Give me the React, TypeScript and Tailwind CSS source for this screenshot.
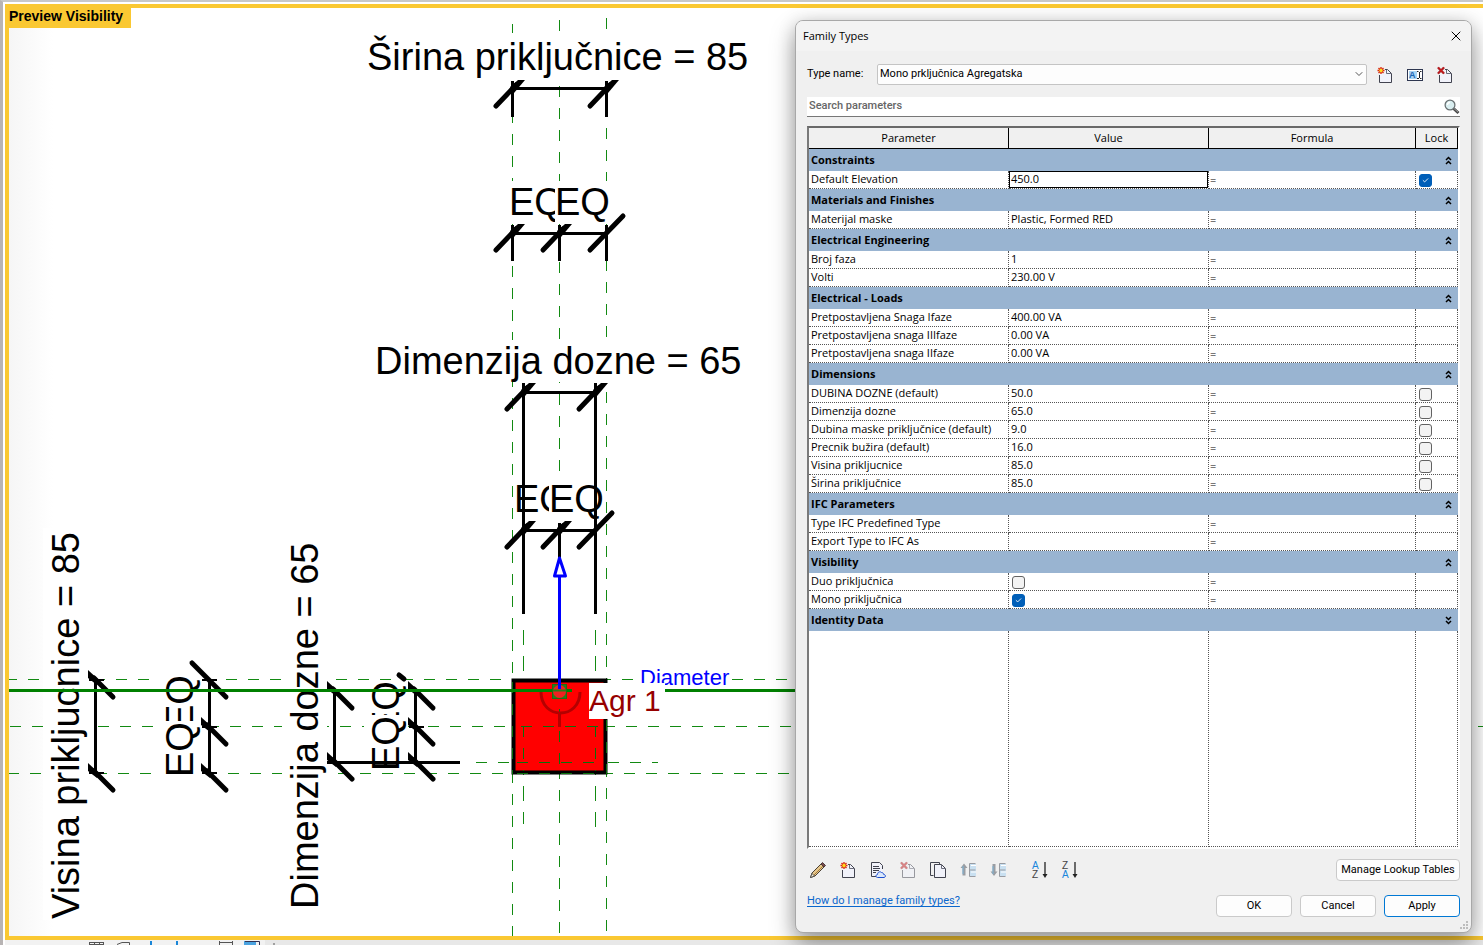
import React, { useState } from 'react';
import { Check, ChevronDown, X } from 'lucide-react';

interface Param {
  name: string;
  value?: string;
  checked?: boolean;
  lock?: boolean;
  active?: boolean;
}

interface ParamGroup {
  title: string;
  collapsed?: boolean;
  params: Param[];
}

const GROUPS: ParamGroup[] = [
  { title: 'Constraints', params: [{ name: 'Default Elevation', value: '450.0', lock: true, active: true }] },
  { title: 'Materials and Finishes', params: [{ name: 'Materijal maske', value: 'Plastic, Formed RED' }] },
  {
    title: 'Electrical Engineering',
    params: [
      { name: 'Broj faza', value: '1' },
      { name: 'Volti', value: '230.00 V' },
    ],
  },
  {
    title: 'Electrical - Loads',
    params: [
      { name: 'Pretpostavljena Snaga Ifaze', value: '400.00 VA' },
      { name: 'Pretpostavljena snaga IIIfaze', value: '0.00 VA' },
      { name: 'Pretpostavljena snaga IIfaze', value: '0.00 VA' },
    ],
  },
  {
    title: 'Dimensions',
    params: [
      { name: 'DUBINA DOZNE (default)', value: '50.0', lock: false },
      { name: 'Dimenzija dozne', value: '65.0', lock: false },
      { name: 'Dubina maske priključnice (default)', value: '9.0', lock: false },
      { name: 'Precnik bužira (default)', value: '16.0', lock: false },
      { name: 'Visina prikljucnice', value: '85.0', lock: false },
      { name: 'Širina priključnice', value: '85.0', lock: false },
    ],
  },
  { title: 'IFC Parameters', params: [{ name: 'Type IFC Predefined Type' }, { name: 'Export Type to IFC As' }] },
  {
    title: 'Visibility',
    params: [
      { name: 'Duo priključnica', checked: false },
      { name: 'Mono priključnica', checked: true },
    ],
  },
  { title: 'Identity Data', collapsed: true, params: [] },
];

/* ---------- Icons ---------- */

function Icon({ children, className = '' }: { children: React.ReactNode; className?: string }) {
  return (
    <svg
      width="16"
      height="16"
      viewBox="0 0 16 16"
      fill="none"
      className={`overflow-visible ${className}`}
      aria-hidden="true"
    >
      {children}
    </svg>
  );
}

function PageShape() {
  return (
    <>
      <path d="M2.5 7V15.5H14.5V6.5L10.5 2.5H7.5V7Z" fill="#f1f2fa" />
      <path d="M2.5 8V15.5H14.5V6.5L10.5 2.5H8" stroke="#41434f" />
      <path d="M9.5 3V6.5H14" stroke="#6b6d7a" />
    </>
  );
}

function NewIcon() {
  return (
    <Icon>
      <PageShape />
      <path d="M4 0V7M0.5 3.5H7.5M1.5 1L6.5 6M6.5 1L1.5 6" stroke="#d92b10" strokeWidth="1.4" />
      <circle cx="4" cy="3.5" r="1.7" fill="#ffd91a" />
    </Icon>
  );
}

function DeleteIcon({ disabled = false }: { disabled?: boolean }) {
  return (
    <Icon className={disabled ? 'opacity-50' : ''}>
      <PageShape />
      <path d="M1 0.5L7 6.5M7 0.5L1 6.5" stroke="#9c1219" strokeWidth="2.2" />
      <path d="M1 0.5L7 6.5M7 0.5L1 6.5" stroke="#e02222" strokeWidth="1" />
    </Icon>
  );
}

function RenameIcon() {
  return (
    <Icon>
      <rect x="0.5" y="2.5" width="15" height="11" fill="#fff" stroke="#2e3650" />
      <rect x="2" y="4" width="8" height="8" fill="#a9d3f2" />
      <text x="2" y="11" fontFamily="Liberation Sans" fontWeight="bold" fontSize="9" fill="#1b66b3">A</text>
      <path d="M10 4.5H11.5M13 4.5H14.5M12.5 5V11M10 11.5H12M13 11.5H14.5" stroke="#222" />
    </Icon>
  );
}

function SearchIcon() {
  return (
    <Icon>
      <path d="M9.5 9.5L14.5 14" stroke="#4b4b4b" strokeWidth="3" />
      <path d="M10 9.5L14 13" stroke="#9a9a9a" />
      <circle cx="6" cy="6" r="4.9" fill="#d9eef0" stroke="#6a7274" strokeWidth="1.3" />
      <path d="M3.5 6C3.5 4.5 4.5 3.5 6 3.5" stroke="#fff" strokeWidth="1.3" />
    </Icon>
  );
}

function PencilIcon() {
  return (
    <Icon>
      <path d="M0.5 15.5L2 11L12 1L15 4L5 14Z" fill="#e5c58a" stroke="#4a4034" />
      <path d="M4 13L13 4" stroke="#a77c3b" />
      <path d="M11 2L12.5 0.5L15.5 3.5L14 5Z" fill="#7b4a4c" stroke="#4a3a3a" />
      <path d="M0.5 15.5L2 11.5L4.5 14Z" fill="#f6eeda" stroke="#444" strokeWidth="0.8" />
    </Icon>
  );
}

function CloudPageIcon() {
  return (
    <Icon>
      <path d="M1.5 0.5H9.5L12.5 3.5V14.5H1.5Z" fill="#f1f2fa" />
      <path d="M6 14.5H1.5V0.5H9.5L12.5 3.5V7" stroke="#41434f" />
      <path d="M3 4.5H9M3 6.5H10M3 8.5H9M3 10.5H6" stroke="#41434f" />
      <path d="M7.5 15.5C5.5 15.5 5.5 12.5 7.5 12.5C7.5 10 10 9 11.5 10.5C13 10.5 13.5 11.5 13.5 12.3C15.8 12.3 16 15.5 14 15.5Z" fill="#dbe8fb" stroke="#1e4fd0" />
    </Icon>
  );
}

function CopyIcon() {
  return (
    <Icon>
      <path d="M3.5 13.5H0.5V0.5H9.5V2" stroke="#41434f" />
      <path d="M4.5 2.5H11.5L15.5 6.5V15.5H4.5Z" fill="#f1f2fa" stroke="#41434f" />
      <path d="M11.5 3V6.5H15" stroke="#6b6d7a" />
    </Icon>
  );
}

function MoveIcon({ down = false }: { down?: boolean }) {
  return (
    <Icon>
      <path
        d={down ? 'M4 14L0.5 9.5H2.5V2H5.5V9.5H7.5Z' : 'M4 1.5L7.5 6H5.5V13.5H2.5V6H0.5Z'}
        fill="#9a9da2"
      />
      <path d="M3 4V12" stroke="#7bb3d6" />
      <rect x="10" y="2" width="6" height="12" fill="#c9e0f1" />
      <path d="M15.5 1.5H9.5V14.5H15.5M9.5 8H15.5" stroke="#999ca2" />
      <path d="M11 3.5H16M11 10H16" stroke="#fff" />
    </Icon>
  );
}

function SortIcon({ desc = false }: { desc?: boolean }) {
  return (
    <Icon>
      <text x="0" y="7" fontFamily="Liberation Sans" fontSize="10" fill={desc ? '#444' : '#1a86dc'}>
        {desc ? 'Z' : 'A'}
      </text>
      <text x="0" y="16" fontFamily="Liberation Sans" fontSize="10" fill={desc ? '#1a86dc' : '#444'}>
        {desc ? 'A' : 'Z'}
      </text>
      <path d="M13 0V13" stroke="#222" strokeWidth="1.3" />
      <path d="M10.5 12H15.5L13 16Z" fill="#222" />
    </Icon>
  );
}

function GroupArrow({ down = false }: { down?: boolean }) {
  return (
    <svg width="7" height="9" viewBox="0 0 7 9" fill="none" stroke="#000" strokeWidth="1.5" aria-hidden="true">
      <path d={down ? 'M1 1L3.5 3.5L6 1M1 5L3.5 7.5L6 5' : 'M1 4L3.5 1.5L6 4M1 8L3.5 5.5L6 8'} />
    </svg>
  );
}

/* ---------- Preview drawing ---------- */

// Slash on a dimension line: "full" runs through, otherwise it is cut short next to the text
function HTick({ x, y, full = false }: { x: number; y: number; full?: boolean }) {
  return (
    <g>
      <path d={`M${x - 16} ${y + 17}L${x + (full ? 17 : 4)} ${y - (full ? 17 : 4)}`} strokeWidth="5" strokeLinecap="round" />
      {!full && <path d={`M${x - 2} ${y - 2}L${x + 6} ${y - 9}H${x + 13}L${x + 2} ${y + 4}Z`} fill="#000" stroke="none" />}
    </g>
  );
}

function VTick({ x, y, full = false }: { x: number; y: number; full?: boolean }) {
  return (
    <g>
      <path d={`M${x + 17} ${y + 17}L${x - (full ? 17 : 2)} ${y - (full ? 17 : 2)}`} strokeWidth="5" strokeLinecap="round" />
      {!full && <path d={`M${x - 8} ${y - 10}V${y - 2}L${x + 1} ${y + 5}L${x + 4} ${y + 1}Z`} fill="#000" stroke="none" />}
      <path d={`M${x - 7} ${y}H${x + 8}`} strokeWidth="2" />
    </g>
  );
}

function PreviewDrawing() {
  return (
    <svg className="absolute inset-0 h-full w-full" fontFamily="'Liberation Sans', Arial, sans-serif" fill="none">
      <g transform="translate(-9 -8)">
        {/* Reference planes */}
        <g stroke="#128a12" strokeWidth="1">
          <path d="M512.5 24V936" strokeDasharray="11 11" />
          <path d="M559.5 20V936" strokeDasharray="11 11" />
          <path d="M606.5 18V936" strokeDasharray="11 11" />
          <path d="M6 679.5H800" strokeDasharray="11 11" />
          <path d="M10 726.5H800" strokeDasharray="11 11" />
          <path d="M8 773.5H800" strokeDasharray="11 11" />
          <path d="M476 762.5H658" strokeDasharray="11 11" />
          <path d="M523.5 630V824M595.5 630V829" strokeDasharray="15 11" />
          <path d="M1478 726.5H1483" />
        </g>

        {/* Masks behind the dimension texts */}
        <g fill="#fff">
          <rect x="366" y="33" width="384" height="46" />
          <rect x="508" y="181" width="102" height="43" />
          <rect x="374" y="340" width="368" height="42" />
          <rect x="513" y="477" width="90" height="43" />
          <rect x="43" y="528" width="45" height="392" />
          <rect x="157" y="674" width="45" height="104" />
          <rect x="282" y="540" width="45" height="370" />
          <rect x="364" y="680" width="44" height="91" />
          <rect x="638" y="665" width="94" height="20" />
        </g>

        {/* Dimension lines */}
        <g stroke="#000" strokeWidth="3">
          <path d="M512 88.5H607M512.5 81V117M606.5 81V117" />
          <HTick x={512} y={89} />
          <HTick x={606} y={89} />

          <path d="M512 233.5H607M512.5 225V261M559.5 225V261M606.5 225V261" />
          <HTick x={512} y={233} />
          <HTick x={559} y={233} />
          <HTick x={606} y={233} full />

          <path d="M523 392.5H596M523.5 383V614M595.5 383V614" />
          <HTick x={523} y={392} />
          <HTick x={595} y={392} />

          <path d="M523 530.5H596M559.5 523V558" />
          <HTick x={523} y={530} />
          <HTick x={559} y={530} />
          <HTick x={595} y={530} full />

          <path d="M95.5 679V774" />
          <VTick x={96} y={680} />
          <VTick x={96} y={773} />

          <path d="M209.5 679V774" />
          <VTick x={209} y={680} full />
          <VTick x={209} y={727} />
          <VTick x={209} y={773} />

          <path d="M334.5 690V763M327 762.5H460" />
          <VTick x={335} y={691} />
          <VTick x={335} y={762} />

          <path d="M415.5 690V763" />
          <VTick x={416} y={691} />
          <VTick x={416} y={727} />
          <VTick x={416} y={762} />
          <path d="M399 675L404 679" strokeWidth="5" strokeLinecap="round" />
        </g>

        {/* Dimension texts */}
        <g fill="#000" fontSize="38">
          <text x="367" y="70">Širina priključnice = 85</text>
          <text x="375" y="374">Dimenzija dozne = 65</text>

          <text x="509" y="215">EQ</text>
          <rect x="555" y="186" width="30" height="37" fill="#fff" />
          <text x="555" y="215">EQ</text>

          <text x="514" y="512">EQ</text>
          <rect x="549" y="483" width="30" height="36" fill="#fff" />
          <path d="M523.5 477V520" stroke="#000" strokeWidth="3" />
          <text x="549" y="512">EQ</text>

          <text transform="translate(79 919) rotate(-90)">Visina prikljucnice = 85</text>
          <text transform="translate(318 909) rotate(-90)">Dimenzija dozne = 65</text>

          <text transform="translate(193 730) rotate(-90)">EQ</text>
          <rect x="163" y="721" width="38" height="30" fill="#fff" />
          <text transform="translate(193 777) rotate(-90)">EQ</text>

          <text transform="translate(399 736) rotate(-90)">EQ</text>
          <rect x="369" y="715" width="38" height="30" fill="#fff" />
          <text transform="translate(399 771) rotate(-90)">EQ</text>
        </g>
        <path d="M364 762.5H408" stroke="#000" strokeWidth="3" />

        {/* Socket */}
        <rect x="513.5" y="680.5" width="92" height="92" fill="#f00" stroke="#000" strokeWidth="4" />
        <g stroke="#0a700a" strokeWidth="1">
          <path d="M512.5 682V774M606.5 720V774M559.5 709V770M523.5 726V771M595.5 726V771" strokeDasharray="11 11" />
          <path d="M521 726.5H604M517 762.5H604M517 773.5H604" strokeDasharray="11 11" />
        </g>
        <path d="M541 692C541 720 580 720 580 692M559.5 713V727" stroke="#b40000" strokeWidth="3" />
        <path d="M9 690.5H572" stroke="#008000" strokeWidth="3" />
        <path d="M660 690.5H800" stroke="#008000" strokeWidth="3" />
        <rect x="552.5" y="684.5" width="14" height="14" fill="#2b7a1a" stroke="#1d6e12" />
        <circle cx="559.5" cy="691.5" r="6.5" fill="#f02020" />
        <path d="M553 690.5H566" stroke="#2b7a1a" strokeWidth="2" />

        {/* Connector direction arrow */}
        <g stroke="#00f" strokeWidth="3">
          <path d="M559.5 577V689" />
          <path d="M559.5 558L565.5 576H554.5Z" fill="#fff" strokeLinejoin="round" />
        </g>

        <text x="640" y="685" fontSize="22" fill="#00f">Diameter</text>
        <rect x="589" y="683" width="76" height="36" fill="#fff" />
        <text x="589" y="711" fontSize="30" fill="#960000">Agr 1</text>
      </g>
    </svg>
  );
}

/* ---------- Dialog ---------- */

function CheckBox({ label, initial }: { label: string; initial: boolean }) {
  const [checked, setChecked] = useState(initial);

  return (
    <span className="relative mt-[3px] ml-[3px] block size-[13px]">
      <input
        type="checkbox"
        aria-label={label}
        checked={checked}
        onChange={(e) => setChecked(e.target.checked)}
        className="block size-[13px] appearance-none rounded-[3px] border border-[#626262] bg-[#f3f3f3] checked:border-[#005fb8] checked:bg-[#005fb8]"
      />
      {checked && (
        <Check className="pointer-events-none absolute top-[3px] left-[3px] size-[7px] text-white" strokeWidth={3} />
      )}
    </span>
  );
}

function ParamRow({ param }: { param: Param }) {
  const [value, setValue] = useState(param.value ?? '');
  const cell = 'h-[18px] border-r border-b border-dotted border-[#555] p-0 align-top';

  return (
    <tr className="bg-white">
      <td className={`${cell} pl-0.5 leading-[16px] whitespace-nowrap`}>{param.name}</td>
      <td className={cell}>
        {param.checked !== undefined ? (
          <CheckBox label={param.name} initial={param.checked} />
        ) : (
          <input
            type="text"
            aria-label={param.name}
            value={value}
            onChange={(e) => setValue(e.target.value)}
            className={`block h-[17px] w-full pb-0.5 outline-none ${
              param.active ? 'border border-black px-px' : 'px-0.5'
            }`}
          />
        )}
      </td>
      <td className={`${cell} pl-px leading-[17px]`}>=</td>
      <td className={cell}>
        {param.lock !== undefined && <CheckBox label={`Lock ${param.name}`} initial={param.lock} />}
      </td>
    </tr>
  );
}

function ParamTable() {
  const head = 'h-[21px] border-r border-b border-black bg-[#f0f0f0] p-0 text-center font-normal';
  const filler = 'border-r border-b border-dotted border-[#555] p-0';

  return (
    <div className="mt-[9px] flex-1 border-2 border-t-[#696969] border-r-white border-b-white border-l-[#7a7a7a] bg-white">
      <table className="h-full w-full table-fixed border-separate border-spacing-0 font-['Open_Sans','Noto_Sans',sans-serif] text-[11px]">
        <colgroup>
          <col className="w-[200px]" />
          <col className="w-[200px]" />
          <col />
          <col className="w-[42px]" />
        </colgroup>
        <thead>
          <tr>
            <th className={head}>Parameter</th>
            <th className={head}>Value</th>
            <th className={head}>Formula</th>
            <th className={head}>Lock</th>
          </tr>
        </thead>
        <tbody>
          {GROUPS.map((group) => (
            <React.Fragment key={group.title}>
              <tr className="bg-[#99b4d1]">
                <th colSpan={4} className="h-[22px] p-0 text-left font-bold">
                  <div className="flex items-center justify-between pt-px pr-1.5 pl-0.5">
                    {group.title}
                    <button type="button" aria-label={`Toggle ${group.title}`}>
                      <GroupArrow down={group.collapsed} />
                    </button>
                  </div>
                </th>
              </tr>
              {group.params.map((param) => (
                <ParamRow key={param.name} param={param} />
              ))}
            </React.Fragment>
          ))}
          <tr className="h-full">
            <td className={filler} />
            <td className={filler} />
            <td className={filler} />
            <td className={filler} />
          </tr>
        </tbody>
      </table>
    </div>
  );
}

const TOOLS = [
  { label: 'Edit parameter', icon: <PencilIcon /> },
  { label: 'New parameter', icon: <NewIcon /> },
  { label: 'Shared parameter', icon: <CloudPageIcon /> },
  { label: 'Delete parameter', icon: <DeleteIcon disabled /> },
  { label: 'Copy parameter', icon: <CopyIcon /> },
  { label: 'Move up', icon: <MoveIcon /> },
  { label: 'Move down', icon: <MoveIcon down /> },
];

function FamilyTypesDialog() {
  const button =
    'flex h-[22px] items-center justify-center rounded-[4px] border bg-[#fdfdfd]';

  return (
    <section
      role="dialog"
      aria-label="Family Types"
      className="absolute top-[18px] right-[11px] bottom-3 flex w-[677px] flex-col overflow-hidden rounded-lg border border-[#a8a8a8] bg-[#f0f0f0] text-[11px] shadow-[0_12px_24px_rgba(0,0,0,0.34),0_2px_18px_rgba(0,0,0,0.16)]"
    >
      <header className="flex h-[30px] items-center justify-between bg-[#f3f3f3] pr-[7px] pl-[7px]">
        <h1 className="font-['Open_Sans','Noto_Sans',sans-serif] text-[11px]">Family Types</h1>
        <button type="button" aria-label="Close">
          <X className="size-4" strokeWidth={1.5} />
        </button>
      </header>

      <div className="flex min-h-0 flex-1 flex-col px-[11px] pt-[13px] pb-[15px]">
        <div className="flex items-center">
          <label htmlFor="type-name" className="w-[70px]">
            Type name:
          </label>
          <div className="relative flex-1">
            <select
              id="type-name"
              className="block h-[21px] w-full appearance-none rounded-[2px] border border-[#c4c4c4] bg-[#fdfdfd] pl-0.5"
            >
              <option>Mono prključnica Agregatska</option>
            </select>
            <ChevronDown className="pointer-events-none absolute top-1 right-0.5 size-3 text-[#555]" strokeWidth={2} />
          </div>
          <div className="flex gap-[14px] pr-[7px] pl-[10px]">
            <button type="button" aria-label="New type"><NewIcon /></button>
            <button type="button" aria-label="Rename type"><RenameIcon /></button>
            <button type="button" aria-label="Delete type"><DeleteIcon /></button>
          </div>
        </div>

        <div className="mt-3 flex h-5 items-center border-b border-[#777] bg-white">
          <input
            type="search"
            aria-label="Search parameters"
            placeholder="Search parameters"
            className="min-w-0 flex-1 pl-0.5 outline-none placeholder:font-medium placeholder:text-[#666]"
          />
          <button type="button" aria-label="Search"><SearchIcon /></button>
        </div>

        <ParamTable />

        <div className="mt-[10px] flex items-center">
          <div className="flex gap-[14px] pl-[3px]">
            {TOOLS.map((tool) => (
              <button key={tool.label} type="button" aria-label={tool.label}>
                {tool.icon}
              </button>
            ))}
          </div>
          <div className="ml-[26px] flex gap-[14px]">
            <button type="button" aria-label="Sort ascending"><SortIcon /></button>
            <button type="button" aria-label="Sort descending"><SortIcon desc /></button>
          </div>
          <button type="button" className={`${button} ml-auto w-[124px] border-[#cacaca]`}>
            Manage Lookup Tables
          </button>
        </div>

        <div className="mt-[14px] flex gap-2">
          <a href="#help" className="mr-auto -mt-0.5 self-start text-[#0a66cc] underline underline-offset-2">
            How do I manage family types?
          </a>
          <button type="button" className={`${button} w-[76px] border-[#cacaca]`}>OK</button>
          <button type="button" className={`${button} w-[76px] border-[#cacaca]`}>Cancel</button>
          <button type="button" className={`${button} w-[76px] border-[#0078d4]`}>Apply</button>
        </div>
      </div>

      <svg className="absolute right-0.5 bottom-0.5" width="9" height="9" fill="#bdbdbd" aria-hidden="true">
        <path d="M6 0h2v2h-2zM3 3h2v2h-2zM6 3h2v2h-2zM0 6h2v2h-2zM3 6h2v2h-2zM6 6h2v2h-2z" />
      </svg>
    </section>
  );
}

// Upper edge of the view control bar
function ViewBar() {
  return (
    <div className="h-[5px] bg-[#e8e8e8]">
      <svg width="276" height="5" className="block" fill="none" aria-hidden="true">
        <rect width="260" height="5" fill="#f2f2f2" />
        <path d="M84 2.5H99M84 4.5H99M84.5 2V5M89.5 2V5M94.5 2V5M98.5 2V5" stroke="#555" />
        <path d="M112 4.5L117 2.5H124.5V5" stroke="#555" />
        <path d="M146 1V5M172 1V5" stroke="#1a86d8" strokeWidth="2" />
        <path d="M214 2.5H227M214.5 1V5M227.5 1V5" stroke="#555" />
        <rect x="239" y="1" width="12" height="4" fill="#4aa3e0" />
        <path d="M240 1.5H254.5V5" stroke="#335" />
        <circle cx="269" cy="4" r="1" fill="#888" />
      </svg>
    </div>
  );
}

export default function App() {
  return (
    <main className="relative flex h-screen flex-col overflow-hidden border-t-2 border-l-[3px] border-t-[#c8c8c8] border-l-[#b8b4b4] bg-white pt-0.5 pl-0.5 font-[Roboto,'Noto_Sans',sans-serif] text-black">
      <div className="relative flex-1 border-y-4 border-l-4 border-[#fac832] bg-linear-to-r from-[#f6f6f6] via-white via-3% to-white">
        <PreviewDrawing />
        <h2 className="absolute top-0 left-0 h-5 w-[122px] bg-[#fac832] font-['Liberation_Sans',Arial,sans-serif] text-[14px] leading-[17px] font-bold whitespace-nowrap">
          Preview Visibility
        </h2>
      </div>
      <ViewBar />
      <FamilyTypesDialog />
    </main>
  );
}
